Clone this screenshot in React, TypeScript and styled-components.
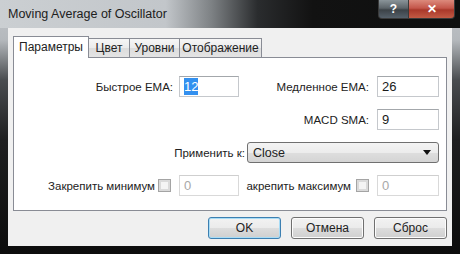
import React from 'react';
import styled, { createGlobalStyle, css } from 'styled-components';

const GlobalStyle = createGlobalStyle`
  html, body {
    margin: 0;
    padding: 0;
    background: #000;
  }
  * {
    box-sizing: border-box;
  }
`;

const Window = styled.div`
  width: 460px;
  height: 254px;
  display: flex;
  flex-direction: column;
  overflow: hidden;
  background: linear-gradient(
    180deg,
    #c3c7cb 0px,
    #b4b8bc 40px,
    #4a4d50 80px,
    #1e1f20 140px,
    #0c0c0c 100%
  );
  font-family: 'Liberation Sans', Arial, sans-serif;
  font-size: 11.5px;
  color: #222;
`;

const TitleBar = styled.div`
  height: 28px;
  flex: none;
  display: flex;
  align-items: flex-start;
  background: linear-gradient(
    90deg,
    #cbcfd2 0%,
    #c2c6ca 36%,
    #7d8184 46%,
    #2a2c2e 56%,
    #121212 68%,
    #0e0f0f 100%
  );
`;

const Title = styled.div`
  padding: 7px 0 0 8px;
  font-size: 12.5px;
  color: #202020;
`;

const Controls = styled.div`
  margin-left: auto;
  margin-right: 5px;
  display: flex;
`;

const CaptionButton = styled.div<{ $close?: boolean }>`
  height: 19px;
  display: flex;
  align-items: center;
  justify-content: center;
  color: #fff;
  font-weight: bold;
  font-size: 12px;
  border: 1px solid #3a3a3a;
  border-top: none;
  ${({ $close }) =>
    $close
      ? css`
          width: 47px;
          border-radius: 0 0 4px 0;
          background: linear-gradient(180deg, #dc8a7c 0%, #c4564a 45%, #a9382a 55%, #c25a44 100%);
        `
      : css`
          width: 30px;
          border-radius: 0 0 0 4px;
          border-right: none;
          background: linear-gradient(180deg, #8a9499 0%, #5c6469 45%, #3c4247 55%, #55606a 100%);
        `}
`;

const Client = styled.div`
  flex: 1;
  margin: 0 8px 8px 8px;
  background: #f0f0f0;
  padding: 8px 5px 0 5px;
  display: flex;
  flex-direction: column;
`;

const TabStrip = styled.div`
  height: 21px;
  display: flex;
  align-items: flex-end;
`;

const Tab = styled.div<{ $active?: boolean; $width: number }>`
  width: ${({ $width }) => $width}px;
  display: flex;
  align-items: center;
  justify-content: center;
  border: 1px solid #898c95;
  border-bottom: none;
  margin-left: -1px;
  font-size: 12px;
  ${({ $active }) =>
    $active
      ? css`
          height: 22px;
          margin-left: 0;
          margin-bottom: -1px;
          background: #fff;
          position: relative;
          z-index: 1;
          padding-bottom: 2px;
        `
      : css`
          height: 19px;
          background: linear-gradient(180deg, #f6f6f6 0%, #ebebeb 50%, #dcdcdc 51%, #e4e4e4 100%);
        `}
`;

const Panel = styled.div`
  background: #fff;
  border: 1px solid #898c95;
  padding: 18px 0 14px 0;
  display: flex;
  flex-direction: column;
  gap: 12px;
`;

const Row = styled.div`
  height: 21px;
  display: flex;
  align-items: center;
`;

const Label = styled.div<{ $width: number }>`
  width: ${({ $width }) => $width}px;
  text-align: right;
  white-space: nowrap;
  flex: none;
`;

const Field = styled.div<{ $width: number; $gap: number; $disabled?: boolean }>`
  width: ${({ $width }) => $width}px;
  margin-left: ${({ $gap }) => $gap}px;
  height: 21px;
  flex: none;
  display: flex;
  align-items: center;
  padding-left: 4px;
  background: #fff;
  border: 1px solid ${({ $disabled }) => ($disabled ? '#d9d9d9' : '#c5c8cc')};
  border-top-color: ${({ $disabled }) => ($disabled ? '#cfcfcf' : '#a3a7ab')};
  color: ${({ $disabled }) => ($disabled ? '#a8a8a8' : '#1a1a1a')};
  font-size: 13px;
`;

const Selected = styled.span`
  background: #3390ef;
  color: #fff;
  padding: 1px 0;
`;

const Select = styled.div<{ $width: number; $gap: number }>`
  width: ${({ $width }) => $width}px;
  margin-left: ${({ $gap }) => $gap}px;
  height: 21px;
  flex: none;
  display: flex;
  align-items: center;
  justify-content: space-between;
  padding: 0 7px 0 5px;
  border: 1px solid #707070;
  border-radius: 3px;
  background: linear-gradient(180deg, #f4f4f4 0%, #ececec 50%, #dedede 51%, #d4d4d4 100%);
  font-size: 12.5px;
`;

const Arrow = styled.div`
  width: 0;
  height: 0;
  border-left: 4px solid transparent;
  border-right: 4px solid transparent;
  border-top: 5px solid #111;
`;

const Check = styled.div<{ $gap: number }>`
  width: 13px;
  height: 13px;
  margin-left: ${({ $gap }) => $gap}px;
  flex: none;
  border: 1px solid #a4a4a4;
  background: #f4f4f4;
  box-shadow: inset 0 0 0 2px #dadada;
`;

const Footer = styled.div`
  display: flex;
  justify-content: flex-end;
  gap: 10px;
  margin-top: 6px;
`;

const Button = styled.div<{ $focused?: boolean }>`
  width: 73px;
  height: 22px;
  display: flex;
  align-items: center;
  justify-content: center;
  border: 1px solid ${({ $focused }) => ($focused ? '#3c7fb1' : '#707070')};
  border-radius: 3px;
  background: linear-gradient(180deg, #f2f2f2 0%, #ebebeb 50%, #dddddd 51%, #cfcfcf 100%);
  box-shadow: inset 0 0 0 1px ${({ $focused }) => ($focused ? '#a8dcf6' : '#fcfcfc')};
  font-size: 12px;
`;

const tabs = [
  { title: 'Параметры', width: 76, active: true },
  { title: 'Цвет', width: 42 },
  { title: 'Уровни', width: 51 },
  { title: 'Отображение', width: 83 },
];

export default function App() {
  return (
    <>
      <GlobalStyle />
      <Window>
        <TitleBar>
          <Title>Moving Average of Oscillator</Title>
          <Controls>
            <CaptionButton>?</CaptionButton>
            <CaptionButton $close>✕</CaptionButton>
          </Controls>
        </TitleBar>
        <Client>
          <TabStrip>
            {tabs.map((tab) => (
              <Tab key={tab.title} $active={tab.active} $width={tab.width}>
                {tab.title}
              </Tab>
            ))}
          </TabStrip>
          <Panel>
            <Row>
              <Label $width={159}>Быстрое EMA:</Label>
              <Field $width={60} $gap={6}>
                <Selected>12</Selected>
              </Field>
              <Label $width={130}>Медленное EMA:</Label>
              <Field $width={62} $gap={8}>26</Field>
            </Row>
            <Row>
              <Label $width={355}>MACD SMA:</Label>
              <Field $width={62} $gap={8}>9</Field>
            </Row>
            <Row>
              <Label $width={231}>Применить к:</Label>
              <Select $width={192} $gap={2}>
                Close
                <Arrow />
              </Select>
            </Row>
            <Row>
              <Label $width={141}>Закрепить минимум</Label>
              <Check $gap={3} />
              <Field $width={60} $gap={8} $disabled>0</Field>
              <Label $width={112}>акрепить максимум</Label>
              <Check $gap={5} />
              <Field $width={62} $gap={8} $disabled>0</Field>
            </Row>
          </Panel>
          <Footer>
            <Button $focused>OK</Button>
            <Button>Отмена</Button>
            <Button>Сброс</Button>
          </Footer>
        </Client>
      </Window>
    </>
  );
}
